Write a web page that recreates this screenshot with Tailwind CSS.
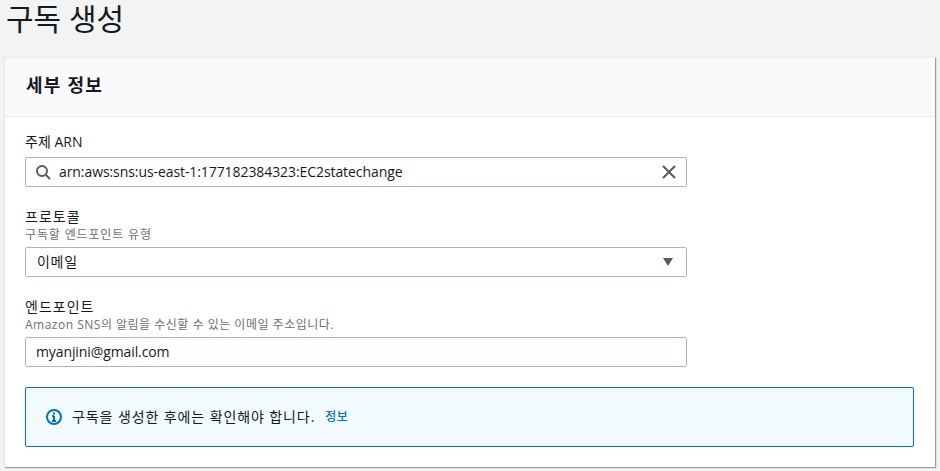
<!DOCTYPE html>
<html lang="ko">
  <head>
    <meta charset="UTF-8" />
    <meta name="viewport" content="width=device-width, initial-scale=1.0" />
    <script src="https://cdn.jsdelivr.net/npm/@tailwindcss/browser@4"></script>
    <title>구독 생성</title>
  </head>
  <body class="h-[471px] overflow-hidden bg-[#f2f3f3] font-['Open_Sans','Noto_Sans_CJK_KR',sans-serif] text-[14px] text-[#16191f]">
    <h1 class="h-[57px] pl-[6px] text-[30px] leading-[38px] font-normal">구독 생성</h1>

    <div class="ml-[4px] w-[931px] h-[410px] bg-white border-l border-l-[#e4e6e6] border-t border-t-[#eaeded] shadow-[1px_1px_1px_0_rgba(0,28,36,0.4)]">
      <div class="h-[59px] bg-[#fafafa] border-b border-[#eaeded] pl-[21px] pr-[20px] flex items-center">
        <h2 class="text-[18px] font-bold leading-[22px] tracking-[1.2px] -mt-[4px]">세부 정보</h2>
      </div>

      <div class="px-[20px] pt-[14px]">
        <label class="block leading-[22px]">주제 ARN</label>
        <div class="mt-[4px] w-[662px] h-[30px] flex items-center border border-[#aab7b8] rounded-[2px] pl-[9px] pr-[9px]">
          <svg class="w-[16px] h-[16px] text-[#545b64]" viewBox="0 0 16 16" fill="none" stroke="currentColor" stroke-width="2">
            <circle cx="7" cy="7" r="5" />
            <path d="M11 11l4 4" />
          </svg>
          <span class="ml-[8px] flex-1 leading-[22px] tracking-[-0.08px]">arn:aws:sns:us-east-1:177182384323:EC2statechange</span>
          <svg class="w-[16px] h-[16px] text-[#545b64]" viewBox="0 0 16 16" fill="none" stroke="currentColor" stroke-width="2">
            <path d="M2 2l12 12M14 2L2 14" />
          </svg>
        </div>

        <label class="block mt-[20px] leading-[20px] tracking-[1px]">프로토콜</label>
        <p class="text-[12px] leading-[14px] text-[#687078] tracking-[0.85px] pt-[1px] -mb-[1px]">구독할 엔드포인트 유형</p>
        <div class="mt-[6px] w-[662px] h-[30px] flex items-center justify-between border border-[#aab7b8] rounded-[2px] pl-[11px] pr-[13px]">
          <span class="leading-[22px] tracking-[0.7px]">이메일</span>
          <svg class="w-[10px] h-[8px] text-[#545b64]" viewBox="0 0 10 8" fill="currentColor">
            <path d="M0 0h10L5 8z" />
          </svg>
        </div>

        <label class="block mt-[20px] leading-[20px] tracking-[1px]">엔드포인트</label>
        <p class="text-[12px] leading-[14px] text-[#687078] tracking-[0.5px] pt-[1px] -mb-[1px]">Amazon SNS의 알림을 수신할 수 있는 이메일 주소입니다.</p>
        <div class="mt-[6px] w-[662px] h-[30px] flex items-center border border-[#aab7b8] rounded-[2px] pl-[10px]">
          <span class="leading-[22px] tracking-[-0.1px]">myanjini@gmail.com</span>
        </div>

        <div class="mt-[20px] w-[889px] h-[60px] flex items-center bg-[#f1faff] border border-[#0073bb] rounded-[2px] pl-[20px]">
          <svg class="w-[16px] h-[16px] text-[#0073bb]" viewBox="0 0 16 16" fill="none" stroke="currentColor" stroke-width="2">
            <circle cx="8" cy="8" r="7" />
            <path d="M8 7v5M6 12h4M6 7h2" stroke-width="2" />
            <path d="M7 3.5h2v2H7z" fill="currentColor" stroke="none" />
          </svg>
          <span class="ml-[10px] leading-[22px] tracking-[0.9px]">구독을 생성한 후에는 확인해야 합니다.</span>
          <a href="#" class="ml-[10px] text-[12px] font-medium tracking-[0.6px] text-[#0073bb]">정보</a>
        </div>
      </div>
    </div>
  </body>
</html>
